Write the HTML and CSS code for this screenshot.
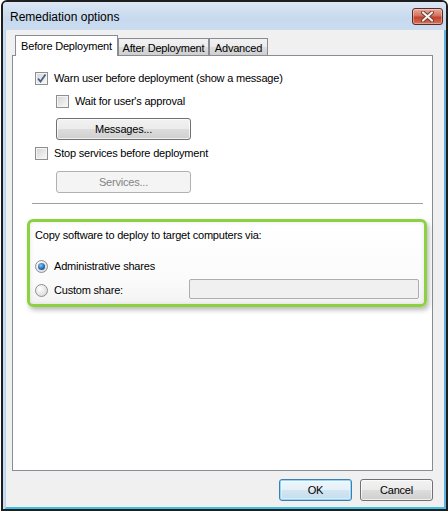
FILE: index.html
```html
<!DOCTYPE html>
<html>
<head>
<meta charset="utf-8">
<link rel="stylesheet" href="styles.css">
</head>
<body>
<div class="window">
  <div class="titlebar">
    <span class="title">Remediation options</span>
    <div class="close">
      <svg width="15" height="11" viewBox="0 0 15 11">
        <path d="M3 1.5 L12 9.5 M12 1.5 L3 9.5" stroke="#6a3a32" stroke-width="4" stroke-linecap="round"/>
        <path d="M3 1.5 L12 9.5 M12 1.5 L3 9.5" stroke="#f4f0ee" stroke-width="2.2" stroke-linecap="round"/>
      </svg>
    </div>
  </div>
  <div class="client">
    <div class="tabs">
      <div class="tab active">Before Deployment</div>
      <div class="tab t-after">After Deployment</div>
      <div class="tab t-adv">Advanced</div>
    </div>
    <div class="panel">
      <div class="row r1">
        <span class="cb">
          <svg width="11" height="11" viewBox="0 0 11 11"><path d="M2 5.5 L4.5 8.5 L9.5 1.5" stroke="#4b5f8a" stroke-width="1.8" fill="none"/></svg>
        </span>
        <span class="lbl">Warn user before deployment (show a message)</span>
      </div>
      <div class="row r2 indent">
        <span class="cb"></span>
        <span class="lbl">Wait for user's approval</span>
      </div>
      <div class="btn b1">Messages...</div>
      <div class="row r3">
        <span class="cb"></span>
        <span class="lbl">Stop services before deployment</span>
      </div>
      <div class="btn disabled b2">Services...</div>
      <div class="sep"></div>
      <div class="greenbox">
        <div class="gtext">Copy software to deploy to target computers via:</div>
        <div class="row rad1">
          <span class="radio on"><span class="dot"></span></span>
          <span class="lbl">Administrative shares</span>
        </div>
        <div class="row rad2">
          <span class="radwrap">
            <span class="radio"></span>
            <span class="lbl">Custom share:</span>
          </span>
          <span class="input"></span>
        </div>
      </div>
    </div>
    <div class="footer">
      <div class="btn fbtn default">OK</div>
      <div class="btn fbtn">Cancel</div>
    </div>
  </div>
</div>
</body>
</html>
```

FILE: styles.css
```css
html, body {
  margin: 0;
  padding: 0;
  background: #ffffff;
}
body {
  font-family: "Liberation Sans", Arial, sans-serif;
  font-size: 11px;
  letter-spacing: -0.2px;
  color: #000;
}
.window {
  margin-left: 1px;
  width: 447px;
  height: 511px;
  box-sizing: border-box;
  border: 2px solid #1e1e1e;
  border-radius: 6px 6px 0 0;
  background: #c8dbef;
  display: flex;
  flex-direction: column;
}
.titlebar {
  height: 28px;
  flex: none;
  display: flex;
  align-items: flex-start;
  background: linear-gradient(#dbe7f4, #c6d9ee 60%, #cbdcef);
  border-radius: 4px 4px 0 0;
}
.title {
  margin-left: 7px;
  margin-top: 8px;
  font-size: 12px;
  letter-spacing: 0;
  line-height: 14px;
  color: #000;
}
.close {
  margin-left: auto;
  margin-right: 3px;
  margin-top: 6px;
  width: 31px;
  height: 17px;
  box-sizing: border-box;
  border: 1px solid #5c2a24;
  border-radius: 3px;
  background: linear-gradient(#e9a99b, #d5725e 45%, #c4412a 55%, #d4735d);
  display: flex;
  align-items: center;
  justify-content: center;
  box-shadow: inset 0 0 0 1px rgba(255,255,255,0.35);
}
.client {
  flex: 1;
  margin-left: 2px;
  background: #f0f0f0;
  border-right: 2px solid #5fb0e4;
  border-bottom: 2px solid #3cbfe6;
  border-left: 1px solid #b9d3ee;
  padding: 5px 11px 0 6px;
  display: flex;
  flex-direction: column;
}
.tabs {
  height: 20px;
  display: flex;
  align-items: flex-end;
  padding-left: 3px;
}
.tab {
  box-sizing: border-box;
  height: 17px;
  border: 1px solid #898c95;
  border-bottom: none;
  background: linear-gradient(#f2f2f2, #ebebeb 50%, #dddddd 50%, #cfcfcf);
  display: flex;
  align-items: center;
  justify-content: center;
  padding-top: 1px;
}
.tab.active {
  width: 103px;
  height: 21px;
  margin-bottom: -1px;
  background: #ffffff;
  position: relative;
  z-index: 1;
  padding-top: 0;
  padding-bottom: 1px;
}
.t-after {
  width: 91px;
}
.t-adv {
  width: 59px;
}
.panel {
  height: 416px;
  box-sizing: border-box;
  border: 1px solid #898c95;
  background: #ffffff;
  padding: 15px 9px 0 22px;
  display: flex;
  flex-direction: column;
  align-items: flex-start;
}
.row {
  display: flex;
  align-items: center;
  height: 13px;
}
.lbl {
  margin-left: 6px;
  line-height: 13px;
  white-space: nowrap;
}
.indent {
  margin-left: 21px;
}
.r1 { margin-top: 1px; }
.r2 { margin-top: 10px; }
.r3 { margin-top: 7px; }
.cb {
  width: 13px;
  height: 13px;
  box-sizing: border-box;
  border: 1px solid #8e8f8f;
  background: linear-gradient(135deg, #d4d4d4, #efefef 70%, #fafafa);
  box-shadow: inset 0 0 0 1px #f4f4f4;
  display: flex;
  align-items: center;
  justify-content: center;
  flex: none;
}
.btn {
  box-sizing: border-box;
  height: 22px;
  border: 1px solid #707070;
  border-radius: 3px;
  background: linear-gradient(#f2f2f2, #ebebeb 50%, #dddddd 50%, #cfcfcf);
  box-shadow: inset 0 0 0 1px rgba(255,255,255,0.7);
  display: flex;
  align-items: center;
  justify-content: center;
}
.b1 {
  width: 135px;
  margin-left: 21px;
  margin-top: 10px;
}
.b2 {
  width: 135px;
  margin-left: 21px;
  margin-top: 11px;
}
.btn.disabled {
  border-color: #adb2b5;
  background: #f4f4f4;
  color: #838383;
  box-shadow: none;
}
.sep {
  align-self: stretch;
  margin-left: -3px;
  margin-top: 10px;
  height: 1px;
  background: #a0a0a0;
}
.greenbox {
  margin-left: -8px;
  margin-top: 15px;
  width: 400px;
  height: 88px;
  box-sizing: border-box;
  border: 3px solid #8cd13f;
  border-radius: 6px;
  background: linear-gradient(#ffffff, #fbfbfb 70%, #f3f3f3);
  box-shadow: 2px 3px 5px rgba(0,0,0,0.28), inset 0 0 4px rgba(0,0,0,0.10);
  padding: 6px 5px 0 5px;
  display: flex;
  flex-direction: column;
}
.gtext {
  line-height: 14px;
  white-space: nowrap;
}
.rad1 {
  margin-top: 18px;
}
.rad2 {
  margin-top: 6px;
  height: 20px;
}
.radwrap {
  width: 154px;
  display: flex;
  align-items: center;
  padding-top: 2px;
}
.radio {
  width: 13px;
  height: 13px;
  box-sizing: border-box;
  border-radius: 50%;
  border: 1px solid #8e8f8f;
  background: radial-gradient(circle at 35% 35%, #ffffff, #e4e4e4 60%, #cfcfcf);
  display: flex;
  align-items: center;
  justify-content: center;
  flex: none;
}
.radio .dot {
  width: 7px;
  height: 7px;
  border-radius: 50%;
  background: radial-gradient(circle at 40% 35%, #8cc8ee, #1f6cb4 55%, #143f78);
}
.input {
  width: 230px;
  height: 20px;
  box-sizing: border-box;
  border: 1px solid #abadb3;
  border-radius: 2px;
  background: #f0f0f0;
}
.footer {
  display: flex;
  justify-content: flex-end;
  gap: 8px;
  margin-top: 8px;
}
.fbtn {
  width: 73px;
}
.fbtn.default {
  border-color: #3c7fb1;
  box-shadow: inset 0 0 0 1px #8fd6f7, inset 0 0 0 2px rgba(255,255,255,0.4);
  background: linear-gradient(#eef6fb, #e4eff7 50%, #d3e5f1 50%, #c4dced);
}
```
